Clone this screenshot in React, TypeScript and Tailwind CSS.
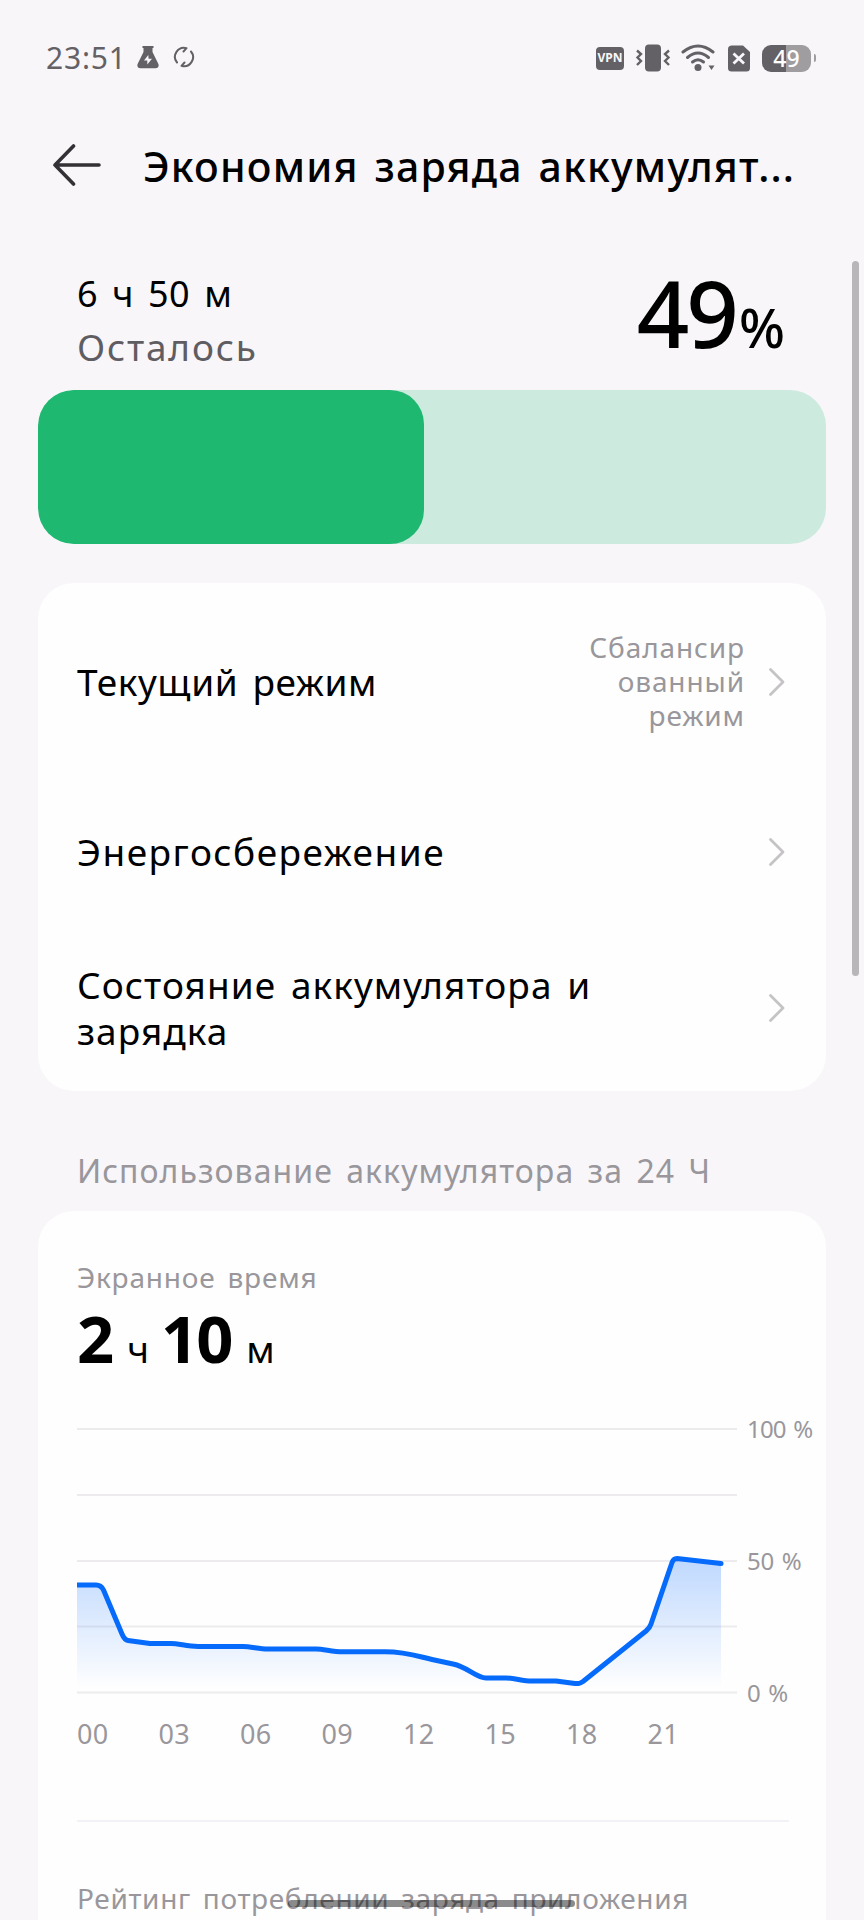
import React from 'react';

const chartLine =
  'M0 171 H19 Q24 171 26.500 176 L45 220 Q47.500 226 51 226.500 L73 229.500 H94 C102 229.500 110 232.500 121 232.500 H166 C174 232.500 182 235 191 235 H239 C247 235 255 237.800 266 237.800 H308 C330 237.800 343 243 355 245.500 L376 250 C391 253 399 264 409 264 H429 C438 264 445 267 455 267 H479 L496 269.300 C502 270 503 269.500 506 267.500 L569 217 Q573 213.500 574 210 L594.500 150 Q596 144.500 600 144.500 L644 149.500';
const chartArea = `${chartLine} V278 H0 Z`;

const gridLines = [15, 81, 147, 212.5, 278.5];
const hours = ['00', '03', '06', '09', '12', '15', '18', '21'];

const Chevron: React.FC = () => (
  <svg width="18" height="30" viewBox="0 0 18 30" fill="none" className="shrink-0">
    <path d="M2.500 2.500 L15 15 L2.500 27.500" stroke="#c5c3c6" strokeWidth="2.8" strokeLinecap="round" strokeLinejoin="round" />
  </svg>
);

const StatusBar: React.FC = () => (
  <div className="flex h-10 items-center justify-between pr-12 pl-[46px] text-[#646166]">
    <div className="flex items-center">
      <span className="w-[91px] text-[30px] leading-10 tracking-[0.8px]">23:51</span>
      {/* Flask */}
      <svg width="22" height="24" viewBox="0 0 22 24" className="mb-0.5">
        <path
          d="M5.500 1 H16.500 V3 H15.500 V7 L21.400 19 Q22.500 23 18.500 23.300 H3.500 Q-0.500 23 0.600 19 L6.500 7 V3 H5.500 Z"
          fill="currentColor"
        />
        <path d="M11.300 10 L7 15.500 H10.300 V19.500 L15 13.800 H11.600 Z" fill="#f8f6f9" />
      </svg>
      {/* Sync */}
      <svg width="22" height="22" viewBox="0 0 22 22" fill="none" stroke="currentColor" strokeWidth="2" strokeLinecap="round" strokeLinejoin="round" className="ml-3.5 mb-0.5">
        <path d="M4 16.500 A9 9 0 0 1 13.500 2.200 L10.500 5.500" />
        <path d="M18 5.500 A9 9 0 0 1 8.500 19.800 L11.500 16.500" />
      </svg>
    </div>
    <div className="flex items-center">
      <span className="mr-[11px] flex h-[23px] w-7 items-center justify-center rounded-[4px] bg-[#646166] text-[12px] font-bold leading-none text-[#f8f6f9]">
        VPN
      </span>
      {/* Vibration */}
      <svg width="36" height="28" viewBox="0 0 36 28" fill="none" stroke="currentColor" strokeWidth="2.4" className="mr-2.5">
        <rect x="10" y="0.500" width="16" height="27" rx="4" fill="currentColor" stroke="none" />
        <path d="M2 6.500 L6 10 L2.500 13.500 L6 17 L2 21" />
        <path d="M34 6.500 L30 10 L33.500 13.500 L30 17 L34 21" />
      </svg>
      {/* Wi-Fi */}
      <svg width="34" height="28" viewBox="0 0 34 28" fill="none" stroke="currentColor" strokeWidth="3" strokeLinecap="round" className="mr-[13px]">
        <path d="M2 8 Q17 -4 32 8" />
        <path d="M6.500 13.500 Q17 4.500 27.500 13.500" />
        <path d="M11.500 18 Q17 13.500 22.500 18" />
        <circle cx="17" cy="23.500" r="3.500" fill="currentColor" stroke="none" />
        <path d="M27.500 21.500 H33.500 L30.500 26 Z" fill="currentColor" stroke="none" />
      </svg>
      {/* No SIM */}
      <svg width="22" height="27" viewBox="0 0 22 27" className="mr-3">
        <path d="M4 0.500 H15 L22 7 V23 Q22 26.500 18.500 26.500 H3.500 Q0 26.500 0 23 V4 Q0 0.500 4 0.500 Z" fill="currentColor" />
        <path d="M5.500 8.500 L16 18.500 M16 8.500 L5.500 18.500" stroke="#f8f6f9" strokeWidth="2.800" />
      </svg>
      {/* Battery */}
      <div className="flex h-[27px] w-[49px] items-center justify-center rounded-[9px] bg-linear-to-r from-[#646166] from-49% to-[#a09da1] to-49% text-[23px] font-medium leading-none text-white">
        49
      </div>
      <div className="ml-[3px] h-2 w-0.5 rounded-r-sm bg-[#a09da1]" />
    </div>
  </div>
);

const Row: React.FC<{ label: string; value?: string; className: string }> = ({ label, value, className }) => (
  <div className={`flex items-center justify-between pr-10 pl-[39px] [word-spacing:4px] ${className}`}>
    <span className="w-[540px] text-[37px] leading-[46px]">{label}</span>
    <div className="flex items-center gap-[23px]">
      {value && (
        <span className="mb-0.5 w-[160px] text-right text-[28px] leading-[34px] tracking-[0.9px] whitespace-pre-line text-[#99979b]">
          {value}
        </span>
      )}
      <Chevron />
    </div>
  </div>
);

const BatteryChart: React.FC = () => (
  <div className="flex gap-2.5">
    <svg width="660" height="294" viewBox="0 0 660 294" fill="none" className="shrink-0">
      <defs>
        <linearGradient id="area" x1="0" y1="144" x2="0" y2="274" gradientUnits="userSpaceOnUse">
          <stop offset="0" stopColor="#0a6cff" stopOpacity="0.26" />
          <stop offset="1" stopColor="#0a6cff" stopOpacity="0" />
        </linearGradient>
      </defs>
      {gridLines.map((y) => (
        <line key={y} x1="0" x2="660" y1={y} y2={y} stroke="#edebee" strokeWidth="2" />
      ))}
      <path d={chartArea} fill="url(#area)" />
      <path d={chartLine} stroke="#066bfb" strokeWidth="5" strokeLinejoin="round" />
      <circle cx="644" cy="149.500" r="2.500" fill="#066bfb" />
    </svg>
    <div className="flex h-[294px] flex-col justify-between text-[24px] leading-[30px] tracking-[-0.8px] [word-spacing:2px] whitespace-nowrap text-[#99979b]">
      <span>100 %</span>
      <span className="tracking-[-0.3px]">50 %</span>
      <span className="tracking-[-0.3px]">0 %</span>
    </div>
  </div>
);

const App: React.FC = () => (
  <div className="relative h-[1920px] w-[864px] overflow-hidden bg-[#f8f6f9] pt-[38px] font-['Noto_Sans',sans-serif] text-black">
    <StatusBar />

    {/* Header */}
    <div className="mt-[60px] flex h-14 items-center pl-[52px]">
      <svg width="50" height="42" viewBox="0 0 50 42" fill="none" stroke="#333135" strokeWidth="3.600" strokeLinecap="round" strokeLinejoin="round" className="mb-0.5">
        <path d="M21.500 2 L3 21 L21.500 40 M3 21 H47" />
      </svg>
      <h1 className="ml-[41px] text-[41px] leading-[56px] font-medium tracking-[1.2px] [word-spacing:4px] whitespace-nowrap">
        Экономия заряда аккумулят...
      </h1>
    </div>

    {/* Remaining charge */}
    <div className="mt-[72px] flex h-[124px] justify-between pr-[82px] pl-[77px]">
      <div className="mt-px text-[36px] leading-[53px]">
        <p className="tracking-[0.6px] [word-spacing:4px]">6 ч 50 м</p>
        <p className="text-[37px] tracking-[1.8px] text-[#5f5d61]">Осталось</p>
      </div>
      <div className="mt-px text-[92px] leading-[92px] font-medium tracking-[-3px]">
        49<span className="ml-[3px] text-[54px] leading-none">%</span>
      </div>
    </div>
    <div className="mx-[38px] h-[154px] overflow-hidden rounded-[36px] bg-[#cdeadf]">
      <div className="h-full w-[49%] rounded-[34px] bg-[#1eb871]" />
    </div>

    <div className="mx-[38px] mt-[39px] rounded-[36px] bg-[#fefefe]">
      <Row label="Текущий режим" value={'Сбалансир\nованный\nрежим'} className="h-[197px] tracking-[0.6px]" />
      <Row label="Энергосбережение" className="h-36 tracking-[1.5px]" />
      <Row label="Состояние аккумулятора и зарядка" className="h-[167px] tracking-[1.05px]" />
    </div>

    <h2 className="h-[120px] pt-14 pl-[77px] text-[32px] leading-[48px] tracking-[1.05px] [word-spacing:4px] whitespace-nowrap text-[#99979b]">
      Использование аккумулятора за 24 Ч
    </h2>

    {/* Usage card */}
    <div className="mx-[38px] h-[800px] rounded-t-[36px] bg-[#fefefe] pt-12 pl-[39px]">
      <p className="text-[28px] leading-9 tracking-[0.8px] [word-spacing:4px] text-[#99979b]">Экранное время</p>
      <p className="mt-[3px] h-[116px] text-[37px] leading-[80px]">
        <span className="text-[65px] font-bold tracking-[-2px]">2</span>
        <span className="mr-3 ml-[15px]">ч</span>
        <span className="text-[65px] font-bold tracking-[-2px]">10</span>
        <span className="ml-[15px]">м</span>
      </p>
      <BatteryChart />
      <div className="mt-2 grid w-[652px] grid-cols-8 text-[27px] leading-9 tracking-[0.4px] text-[#99979b]">
        {hours.map((hour) => (
          <span key={hour}>{hour}</span>
        ))}
      </div>
      <div className="mt-[68px] h-0.5 w-[712px] bg-[#f3f1f5]" />
      <p className="mt-[58px] text-[28px] leading-9 tracking-[0.65px] [word-spacing:4px] whitespace-nowrap text-[#99979b]">
        Рейтинг потреблении заряда приложения
      </p>
    </div>

    {/* Scroll thumb */}
    <div className="absolute top-[261px] right-[5px] h-[715px] w-[7px] rounded-full bg-[#b9b6b9]" />
    {/* Home indicator */}
    <div className="absolute top-[1900px] left-[288px] h-[7px] w-[287px] rounded-full bg-black/45" />
  </div>
);

export default App;
